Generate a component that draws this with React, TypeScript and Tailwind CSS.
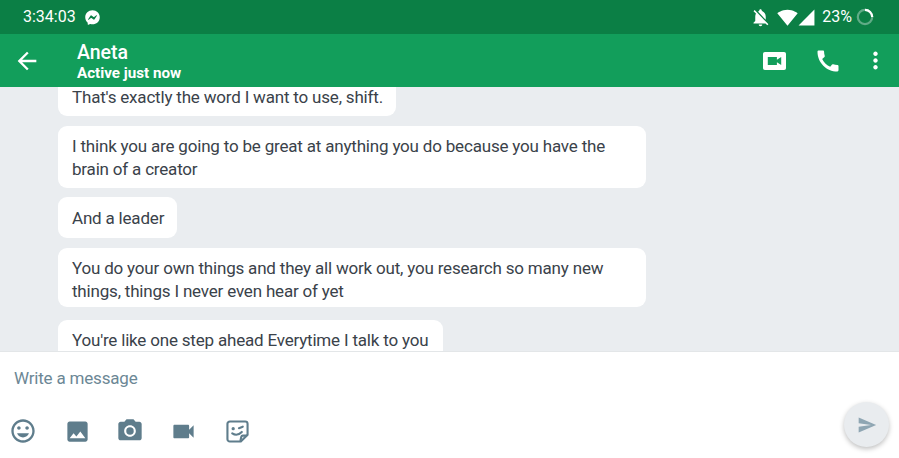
import {
  MdArrowBack,
  MdCall,
  MdImage,
  MdMoreVert,
  MdNotificationsOff,
  MdPhotoCamera,
  MdSend,
  MdSignalCellular4Bar,
  MdSignalWifi4Bar,
  MdTagFaces,
  MdVideocam,
} from 'react-icons/md';
import { FaFacebookMessenger } from 'react-icons/fa';

function VideoBox() {
  return (
    <svg width="23" height="18" viewBox="0 0 24 20" preserveAspectRatio="none">
      <path
        fillRule="evenodd"
        fill="#fff"
        d="M2 0h20a2 2 0 0 1 2 2v16a2 2 0 0 1-2 2H2a2 2 0 0 1-2-2V2a2 2 0 0 1 2-2zM5 5.500v9h9.500v-3l4.500 3v-9l-4.500 3v-3z"
      />
    </svg>
  );
}

function BatteryRing() {
  return (
    <svg width="18" height="18" viewBox="0 0 18 18">
      <circle cx="9" cy="9" r="7.200" fill="none" stroke="#ffffff" strokeOpacity="0.35" strokeWidth="2.200" />
      <path d="M9 1.800A7.200 7.200 0 0 1 16.200 9" fill="none" stroke="#ffffff" strokeWidth="2.200" />
    </svg>
  );
}

function StickerIcon() {
  return (
    <svg width="23" height="23" viewBox="0 0 24 24" fill="none">
      <path
        d="M4 1.500h16a2.500 2.500 0 0 1 2.500 2.500v11.500l-7 7H4A2.500 2.500 0 0 1 1.500 20V4A2.500 2.500 0 0 1 4 1.500z"
        stroke="#5f7d8c"
        strokeWidth="2.200"
      />
      <path d="M15 22l1-4.500a1.500 1.500 0 0 1 1.500-1.200H22" stroke="#5f7d8c" strokeWidth="2.200" />
      <circle cx="7.500" cy="9" r="1.700" fill="#5f7d8c" />
      <path d="M13.500 8.500l4-1.500" stroke="#5f7d8c" strokeWidth="2.200" strokeLinecap="round" />
      <path d="M6.500 14c3 2 7 1.500 10-1.500" stroke="#5f7d8c" strokeWidth="2.200" strokeLinecap="round" />
    </svg>
  );
}

const bubbles = [
  { id: 1, lines: ['That\'s exactly the word I want to use, shift.'], cls: 'h-[29px] pt-0 w-[338px] mb-[10px] leading-[21px] rounded-t-none' },
  {
    id: 2,
    lines: [
      'I think you are going to be great at anything you do because you have the',
      'brain of a creator',
    ],
    cls: 'h-[62px] pt-[9px] w-[588px] mb-[9px] leading-[22.500px]',
  },
  { id: 3, lines: ['And a leader'], cls: 'h-[41px] pt-[10px] w-[119px] mb-[10px] leading-[22.500px]' },
  {
    id: 4,
    lines: [
      'You do your own things and they all work out, you research so many new',
      'things, things I never even hear of yet',
    ],
    cls: 'h-[59px] pt-[9px] w-[588px] mb-[13px] leading-[22.500px]',
  },
  { id: 5, lines: ['You\'re like one step ahead Everytime I talk to you'], cls: 'h-[41px] pt-[9px] w-[385px] leading-[22.500px]' },
];

export default function App() {
  return (
    <div className="w-[899px] h-[458px] flex flex-col overflow-hidden bg-white font-['Roboto',sans-serif]">
      {/* status bar */}
      <div className="h-[34px] bg-[#0b7f45] flex items-center pl-[23px] pr-[25px] text-white">
        <span className="text-[16px]">3:34:03</span>
        <FaFacebookMessenger size={15} className="ml-[9px]" />
        <div className="ml-auto flex items-center">
          <MdNotificationsOff size={21} />
          <MdSignalWifi4Bar size={21} className="ml-[6px]" />
          <MdSignalCellular4Bar size={19} className="-ml-[1px]" />
          <span className="text-[16px] ml-[6px]">23%</span>
          <span className="ml-[4px] flex">
            <BatteryRing />
          </span>
        </div>
      </div>

      {/* header */}
      <div className="h-[53px] bg-[#129e5b] flex items-center text-white">
        <MdArrowBack size={28} className="ml-[13px]" />
        <div className="ml-[36px] flex flex-col pt-[2px]">
          <span className="text-[19.500px] leading-[24px] font-medium">Aneta</span>
          <span className="text-[15.200px] leading-[17px] font-bold">Active just now</span>
        </div>
        <div className="ml-auto flex items-center">
          <VideoBox />
          <MdCall size={28} className="ml-[28px]" />
          <MdMoreVert size={27} className="ml-[20px] mr-[10px]" />
        </div>
      </div>

      {/* messages */}
      <div className="h-[264px] bg-[#eaedf0] pl-[58px] flex flex-col overflow-hidden">
        {bubbles.map((b) => (
          <div key={b.id} className={`shrink-0 bg-white rounded-[9px] px-[14px] text-[17px] tracking-[-0.190px] text-[#3a424a] ${b.cls}`}>
            {b.lines.map((line) => (
              <div key={line} className="whitespace-nowrap">{line}</div>
            ))}
          </div>
        ))}
      </div>

      {/* composer */}
      <div className="flex-1 border-t border-[#e3e6e8] flex flex-col">
        <div className="pl-[14px] pt-[15px] text-[17px] tracking-[-0.190px] leading-[22px] text-[#6c8795]">Write a message</div>
        <div className="flex items-center mt-[26px] pl-[9px] pr-[10px] text-[#5f7d8c]">
          <MdTagFaces size={28} />
          <MdImage size={27} className="ml-[27px]" />
          <MdPhotoCamera size={28} className="ml-[25px]" />
          <MdVideocam size={27} className="ml-[26px]" />
          <span className="ml-[29px] flex">
            <StickerIcon />
          </span>
          <button className="ml-auto -mt-[13px] w-[45px] h-[45px] rounded-full bg-[#e9ecef] shadow-[0_2px_5px_rgba(0,0,0,0.25)] flex items-center justify-center text-[#8fa6b3]">
            <MdSend size={20} />
          </button>
        </div>
      </div>
    </div>
  );
}
